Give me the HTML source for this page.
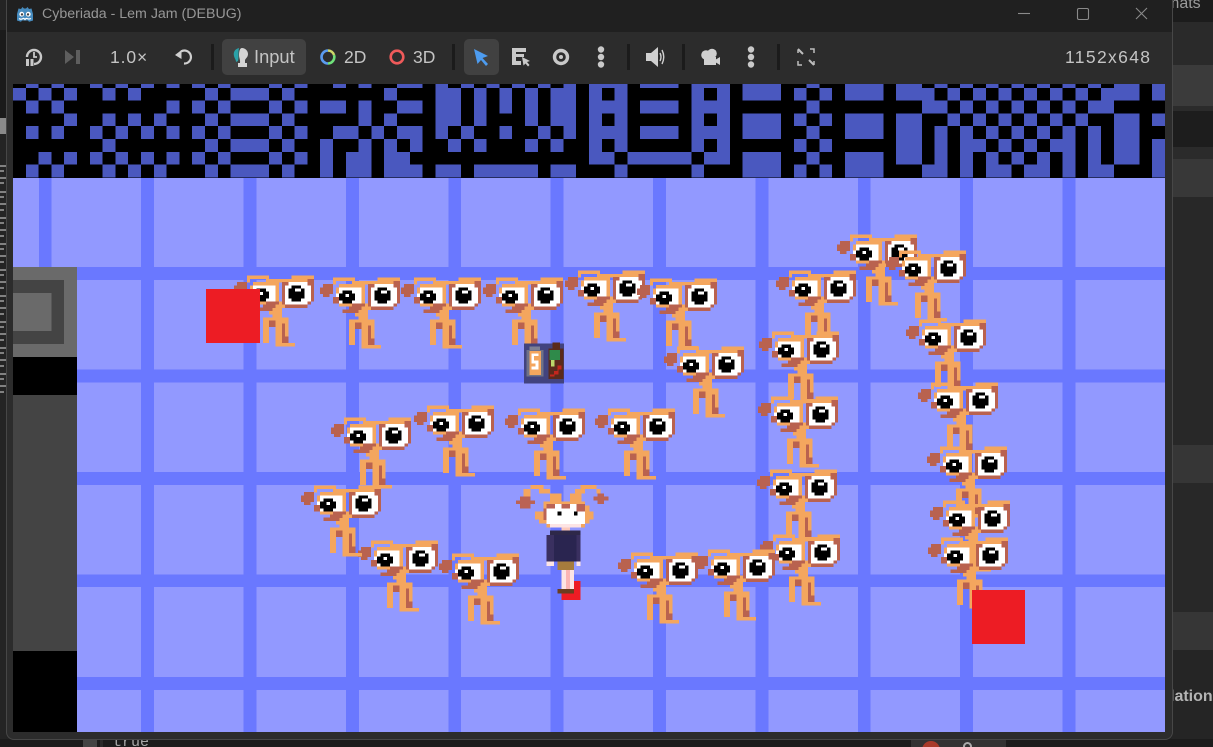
<!DOCTYPE html>
<html><head><meta charset="utf-8"><title>Cyberiada - Lem Jam (DEBUG)</title>
<style>
html,body{margin:0;padding:0;width:1213px;height:747px;overflow:hidden;background:#232323}
*{box-sizing:border-box}
.a{position:absolute}
body{font-family:"Liberation Sans",sans-serif;position:relative}
svg{display:block}
.t{position:absolute;color:#c4c4c4;font-size:17px;line-height:20px;white-space:nowrap}
.sep{position:absolute;top:44px;width:3px;height:26px;background:#1b1b1b}
.btn{position:absolute;top:39px;height:36px;background:#414141;border-radius:5px}
</style></head><body>
<!-- background editor -->
<div class="a" style="left:1172px;top:0;width:41px;height:22px;background:#1c1c1c"></div>
<div class="t" style="left:1172px;top:-6px;width:41px;overflow:hidden;font-size:16px;color:#9a9a9a;text-indent:-6px">mats</div>
<div class="a" style="left:1172px;top:22px;width:41px;height:43px;background:#2a2a2a"></div>
<div class="a" style="left:1172px;top:65px;width:41px;height:41px;background:#3b3b3b"></div>
<div class="a" style="left:1172px;top:106px;width:41px;height:5px;background:#2b2b2b"></div>
<div class="a" style="left:1172px;top:111px;width:41px;height:36px;background:#1d1d1d"></div>
<div class="a" style="left:1172px;top:147px;width:41px;height:12px;background:#2b2b2b"></div>
<div class="a" style="left:1172px;top:159px;width:41px;height:38px;background:#383838"></div>
<div class="a" style="left:1172px;top:197px;width:41px;height:500px;background:#282828"></div>
<div class="a" style="left:1172px;top:445px;width:41px;height:38px;background:#363636"></div>
<div class="a" style="left:1172px;top:612px;width:41px;height:38px;background:#363636"></div>
<div class="a" style="left:1172px;top:650px;width:41px;height:97px;background:#252525"></div>
<div class="t" style="left:1172px;top:687px;width:41px;overflow:hidden;font-size:16px;font-weight:bold;color:#b4b4b4;text-indent:-2px">lation</div>
<div class="a" style="left:0;top:0;width:6px;height:747px;background:#242424"></div>
<div class="a" style="left:0;top:30px;width:6px;height:90px;background:#1b1b1b"></div>
<div class="a" style="left:0;top:118px;width:6px;height:16px;background:#8a8a8a"></div>
<svg class="a" style="left:0;top:160px" width="6" height="240">
<path d="M0 6h6M0 11h4M0 18h6M0 23h4M0 32h6M0 37h4M0 44h6M0 50h4M0 58h6M0 63h4M0 70h6M0 76h4M0 84h6M0 89h4M0 96h6M0 102h4M0 110h6M0 115h4M0 122h6M0 128h4M0 136h6M0 141h4M0 148h6M0 154h4M0 162h6M0 167h4M0 174h6M0 180h4M0 188h6M0 193h4M0 200h6M0 206h4M0 214h6M0 219h4M0 226h6M0 232h4" stroke="#a0a0a0" stroke-width="1.6"/></svg>
<div class="a" style="left:0;top:739px;width:1213px;height:8px;background:#1c1c1c"></div>
<div class="a" style="left:83px;top:739px;width:14px;height:8px;background:#444"></div>
<div class="a" style="left:100px;top:739px;width:3px;height:8px;background:#2b2b2b"></div>
<div class="t" style="left:113px;top:733px;font-family:'Liberation Mono',monospace;font-size:15px;color:#a8a8a8">true</div>
<div class="a" style="left:911px;top:739px;width:95px;height:8px;background:#333"></div>
<div class="a" style="left:922px;top:741px;width:18px;height:18px;border-radius:50%;background:#a83a2a"></div>
<div class="a" style="left:963px;top:742px;width:9px;height:12px;border:2px solid #aaa;border-radius:5px"></div>

<!-- window -->
<div class="a" style="left:6px;top:0;width:1167px;height:740px;background:#2c2c2c;border:1px solid #474747;border-top:0;border-radius:0 0 8px 8px"></div>
<div class="a" style="left:7px;top:0;width:1165px;height:32px;background:#202020"></div>
<svg class="a" style="left:16px;top:5px" width="18" height="18" viewBox="0 0 18 18">
<path d="M1 9 2.500 3.500 5 4 6.500 2 8 3.500h2L11.500 2 13 4l2.500-.5L17 9v6.500l-4 1.200-1-1.200H6l-1 1.200-4-1.200z" fill="#478cbf"/>
<circle cx="5.700" cy="9.200" r="2.400" fill="#fff"/><circle cx="12.300" cy="9.200" r="2.400" fill="#fff"/>
<circle cx="6" cy="9.400" r="1.200" fill="#414042"/><circle cx="12" cy="9.400" r="1.200" fill="#414042"/>
<path d="M3 13.500c2 1.500 3 .5 4 0s2 1 2 1 1-1.500 2-1 2 1 4 0" stroke="#fff" stroke-width="1.200" fill="none"/></svg>
<div class="t" style="left:42px;top:4px;font-size:14.200px;color:#979797">Cyberiada - Lem Jam (DEBUG)</div>
<svg class="a" style="left:1010px;top:0" width="150" height="28" fill="none" stroke="#8a8a8a" stroke-width="1.100">
<path d="M8 13.500h12"/><rect x="67.500" y="8.500" width="11" height="11" rx="1.500"/><path d="M126 8l11 11M137 8l-11 11"/></svg>

<!-- toolbar -->
<svg class="a" style="left:24px;top:46px" width="20" height="22" viewBox="0 0 20 22">
<path d="M3 11a7 7 0 1 1 7 7" fill="none" stroke="#c8c8c8" stroke-width="2.400"/>
<path d="M10 6v5h3" fill="none" stroke="#c8c8c8" stroke-width="1.800"/>
<path d="M2 13h3v7H2zM6.500 13h3v7h-3z" fill="#c8c8c8"/></svg>
<svg class="a" style="left:65px;top:50px" width="16" height="14" viewBox="0 0 16 14"><path d="M0 0l9 7-9 7zM11 0h4v14h-4z" fill="#5e5e5e"/></svg>
<div class="t" style="left:110px;top:47px;font-size:17.500px;letter-spacing:.9px">1.0×</div>
<svg class="a" style="left:175px;top:48px" width="19" height="18" viewBox="0 0 19 18">
<path d="M6 3.500A6.500 6.500 0 1 1 9 15.500" fill="none" stroke="#d0d0d0" stroke-width="2.200"/><path d="M0 6l6.500-5v9z" fill="#d0d0d0" transform="translate(0 1)"/></svg>
<div class="sep" style="left:211px"></div>
<div class="btn" style="left:222px;width:84px"></div>
<svg class="a" style="left:232px;top:47px" width="18" height="22" viewBox="0 0 18 22">
<path d="M7 1C3 2 1 5 2 9c.5 2.500 2 3.500 2 6l2-1c1-3 0-9 1-13z" fill="#2aa1a8"/>
<path d="M10 1c3 0 6 2.500 6 6 0 3-2 4-3 6v3h2v4H6v-4h2c.5-3-1-5-1-8 0-4 1-7 3-7z" fill="#d4d4d4"/></svg>
<div class="t" style="left:254px;top:47px;font-size:18.300px">Input</div>
<svg class="a" style="left:320px;top:49px" width="16" height="16" fill="none" stroke-width="2.600">
<path d="M8 1.500A6.500 6.500 0 0 0 8 14.500" stroke="#5a9bf0"/><path d="M8 14.500A6.500 6.500 0 0 0 14 6" stroke="#6fe07a"/><path d="M14 6A6.500 6.500 0 0 0 8 1.500" stroke="#cdd86a"/></svg>
<div class="t" style="left:344px;top:47px;font-size:17.500px">2D</div>
<svg class="a" style="left:389px;top:49px" width="16" height="16" fill="none"><circle cx="8" cy="8" r="6.300" stroke="#ef5a5a" stroke-width="2.600"/></svg>
<div class="t" style="left:413px;top:47px;font-size:17.500px">3D</div>
<div class="sep" style="left:452px"></div>
<div class="btn" style="left:464px;width:35px"></div>
<svg class="a" style="left:473px;top:48px" width="16" height="18" viewBox="0 0 16 18"><path d="M1 1l14 7-5.500 2L15 16l-2 2-5-6-3.500 4z" fill="#4d9cf0"/></svg>
<svg class="a" style="left:511px;top:47px" width="20" height="20" viewBox="0 0 20 20"><path d="M1 1h14v4H5v2h8v3H5v4h5v4H1z" fill="#c9c9c9"/><path d="M11 10l8 4-3 1 2.500 3-1.500 1.500-2.500-3-2 2z" fill="#c9c9c9"/></svg>
<svg class="a" style="left:552px;top:48px" width="18" height="18" fill="none"><circle cx="9" cy="9" r="6.500" stroke="#c9c9c9" stroke-width="3.400"/><circle cx="9" cy="9" r="2" fill="#c9c9c9"/></svg>
<svg class="a" style="left:597px;top:46px" width="8" height="22" fill="#c9c9c9"><circle cx="4" cy="3.500" r="3.200"/><circle cx="4" cy="11" r="3.200"/><circle cx="4" cy="18.500" r="3.200"/></svg>
<div class="sep" style="left:627px"></div>
<svg class="a" style="left:646px;top:46px" width="20" height="22" viewBox="0 0 20 22"><path d="M0 7h5l7-6v20l-7-6H0z" fill="#d0d0d0"/><path d="M14 7q2 4 0 8M16 4q3.500 7 0 14" fill="none" stroke="#d0d0d0" stroke-width="1.400"/></svg>
<div class="sep" style="left:682px"></div>
<svg class="a" style="left:701px;top:48px" width="19" height="18" viewBox="0 0 19 18"><circle cx="5" cy="7" r="4.800" fill="#d0d0d0"/><circle cx="11" cy="5.500" r="4.800" fill="#d0d0d0"/><path d="M3 9h12v8H3zM14 12l5-3v8l-5-3z" fill="#d0d0d0"/></svg>
<svg class="a" style="left:747px;top:46px" width="8" height="22" fill="#c9c9c9"><circle cx="4" cy="3.500" r="3.200"/><circle cx="4" cy="11" r="3.200"/><circle cx="4" cy="18.500" r="3.200"/></svg>
<div class="sep" style="left:777px"></div>
<svg class="a" style="left:797px;top:48px" width="18" height="18" fill="none" stroke="#bdbdbd" stroke-width="1.500">
<path d="M1 5V1.500M13 1h4v4M1 13v4h4M17 13v4"/><path d="M1 1l5 5M17 17l-5-5" stroke-width="2"/></svg>
<div class="t" style="left:1065px;top:47px;font-size:17.500px;letter-spacing:1.350px">1152x648</div>

<!-- game floor -->
<svg class="a" style="left:13px;top:84px" width="1152" height="648" viewBox="13 84 1152 648" shape-rendering="crispEdges">
<rect x="13" y="84" width="1152" height="648" fill="#9299ff"/>
<path fill="#6a78ff" d="M39 178h12.500v554H39zM141 178h13v554h-13zM243.500 178h12.800v554h-12.800zM346 178h12.800v554H346zM448.300 178h12.800v554h-12.800zM550.700 178h12.800v554h-12.800zM653 178h12.800v554H653zM755.500 178h12.800v554h-12.800zM857.800 178h12.800v554h-12.800zM960.200 178h12.800v554h-12.800zM1062.500 178h12.800v554h-12.800zM13 267h1152v13H13zM13 369.500h1152v12.800H13zM13 472h1152v12.800H13zM13 574.300h1152v12.800H13zM13 677h1152v13H13z"/>
<rect x="13" y="267" width="64" height="465" fill="#000"/>
<rect x="13" y="267" width="64" height="90" fill="#6a6a6a"/>
<rect x="13" y="280" width="51" height="64" fill="#444"/>
<rect x="13" y="293" width="38.400" height="38" fill="#6a6a6a"/>
<rect x="13" y="395" width="64" height="256" fill="#444"/>
</svg>

<!-- tiles -->
<div class="a" style="left:13px;top:84px;width:1152px;height:93.600px;background:#000;overflow:hidden">
<svg class="a" style="left:0;top:-8.800px" width="1152" height="102.400" viewBox="0 0 90 8" shape-rendering="crispEdges">
<path fill="none" stroke="#4a58bf" stroke-width="1" d="
M1 .5h1M3 .5h1M6 .5h1M8 .5h1M10 .5h1M12 .5h1M14 .5h1M16 .5h1M20 .5h1M22 .5h1M25 .5h1M27 .5h1M30 .5h2M33 .5h1M35 .5h1M37 .5h1M39 .5h1M41 .5h1M43 .5h1M45 .5h3M49 .5h3M53 .5h3M57 .5h3M62 .5h1M65 .5h3M69 .5h2M72 .5h1M74 .5h1M76 .5h1M78 .5h1M80 .5h1M82 .5h1M84 .5h1M86 .5h2M89 .5h1
M0 1.500h1M2 1.500h1M4 1.500h1M7 1.500h1M9 1.500h1M15 1.500h1M17 1.500h3M21 1.500h1M29 1.500h1M33 1.500h2M36 1.500h1M38 1.500h1M40 1.500h1M42 1.500h2M45 1.500h1M47 1.500h1M53 1.500h1M55 1.500h1M57 1.500h3M61 1.500h1M63 1.500h1M65 1.500h3M69 1.500h3M73 1.500h1M75 1.500h1M77 1.500h1M79 1.500h1M81 1.500h1M83 1.500h1M85 1.500h3M89 1.500h1
M1 2.500h1M3 2.500h1M12 2.500h1M14 2.500h1M16 2.500h1M20 2.500h1M22 2.500h1M24 2.500h2M27 2.500h1M30 2.500h2M33 2.500h2M36 2.500h1M38 2.500h1M40 2.500h1M42 2.500h2M45 2.500h3M49 2.500h3M53 2.500h3M62 2.500h1M71 2.500h2M74 2.500h1M76 2.500h1M78 2.500h1M80 2.500h1M82 2.500h1M84 2.500h2
M4 3.500h1M7 3.500h1M9 3.500h1M11 3.500h1M15 3.500h1M17 3.500h3M21 3.500h1M27 3.500h1M29 3.500h1M33 3.500h2M36 3.500h1M40 3.500h1M42 3.500h2M45 3.500h1M47 3.500h1M53 3.500h1M55 3.500h1M57 3.500h3M61 3.500h1M63 3.500h1M65 3.500h3M69 3.500h2M73 3.500h1M75 3.500h1M77 3.500h1M79 3.500h1M81 3.500h1M83 3.500h1M86 3.500h2M89 3.500h1
M1 4.500h1M3 4.500h1M6 4.500h1M8 4.500h1M10 4.500h1M12 4.500h1M14 4.500h1M16 4.500h1M20 4.500h1M22 4.500h1M25 4.500h2M28 4.500h1M30 4.500h2M33 4.500h1M35 4.500h1M38 4.500h1M41 4.500h1M43 4.500h1M45 4.500h3M49 4.500h3M53 4.500h3M57 4.500h3M62 4.500h1M65 4.500h3M69 4.500h2M72 4.500h1M74 4.500h1M76 4.500h1M78 4.500h1M80 4.500h1M82 4.500h1M84 4.500h1M86 4.500h2
M7 5.500h1M15 5.500h1M17 5.500h3M21 5.500h1M24 5.500h1M27 5.500h1M29 5.500h1M31 5.500h1M34 5.500h1M36 5.500h1M40 5.500h1M42 5.500h1M45 5.500h1M47 5.500h1M53 5.500h1M55 5.500h1M61 5.500h1M63 5.500h1M69 5.500h2M72 5.500h1M74 5.500h2M77 5.500h1M79 5.500h1M81 5.500h2M84 5.500h1M86 5.500h2M89 5.500h1
M2 6.500h1M4 6.500h1M6 6.500h1M8 6.500h1M10 6.500h1M12 6.500h1M14 6.500h1M16 6.500h1M20 6.500h1M22 6.500h1M24 6.500h1M26 6.500h2M29 6.500h2M45 6.500h2M48 6.500h5M54 6.500h2M57 6.500h3M62 6.500h1M65 6.500h3M69 6.500h2M72 6.500h1M74 6.500h1M76 6.500h1M78 6.500h1M80 6.500h1M82 6.500h1M84 6.500h1M86 6.500h2M89 6.500h1
M1 7.500h1M3 7.500h1M7 7.500h1M9 7.500h1M11 7.500h1M15 7.500h1M17 7.500h3M21 7.500h1M24 7.500h1M26 7.500h2M29 7.500h3M33 7.500h2M36 7.500h5M42 7.500h2M47 7.500h1M53 7.500h1M57 7.500h3M61 7.500h1M63 7.500h1M65 7.500h3M71 7.500h2M74 7.500h1M76 7.500h2M79 7.500h2M82 7.500h1M84 7.500h2M89 7.500h1"/>
</svg></div>

<!-- sprites -->
<svg class="a" style="left:0;top:0" width="1213" height="747" viewBox="0 0 1213 747">
<defs>
<symbol id="e" viewBox="0 0 28 27" width="89.600" height="86.400" overflow="visible">
<g fill="none" stroke-width="1.080" shape-rendering="crispEdges">
<path stroke="#f4a65e" d="M4 4.500h7M18 4.500h7M4 5.500h1M10 5.500h13M6 6.500h8M5 7.500h1M13 7.500h1M5 8.500h1M13 8.500h1M13 9.500h1M13 10.500h1M13 11.500h1M6 12.500h4M14 12.500h1M13 13.500h3M12 14.500h3M11 15.500h4M12 16.500h3M9 17.500h8M9 18.500h2M13 18.500h4M9 19.500h2M13 19.500h2M16 19.500h1M9 20.500h2M13 20.500h2M16 20.500h1M9 21.500h2M13 21.500h2M16 21.500h1M9 22.500h2M13 22.500h2M16 22.500h1M9 23.500h2M13 23.500h2M9 24.500h2M13 24.500h2M13 25.500h2M15 25.500h4"/>
<path stroke="#b9624f" d="M23 5.500h2M1 6.500h3M15 6.500h2M23 6.500h2M0 7.500h4M15 7.500h1M24 7.500h1M0 8.500h4M15 8.500h1M24 8.500h1M1 9.500h2M15 9.500h1M24 9.500h1M4 10.500h2M15 10.500h1M24 10.500h1M4 11.500h2M15 11.500h1M24 11.500h1M10 12.500h4M15 12.500h1M23 12.500h1M9 13.500h4M16 13.500h7M7 14.500h5M11 18.500h2M11 19.500h2M15 19.500h1M15 20.500h1M15 21.500h1M15 22.500h1M15 23.500h2M15 24.500h2"/>
<path stroke="#fff" d="M17 6.500h6M6 7.500h7M16 7.500h2M21 7.500h3M6 8.500h1M10 8.500h3M16 8.500h1M19 8.500h2M22 8.500h2M5 9.500h1M8 9.500h1M11 9.500h2M16 9.500h1M22 9.500h2M11 10.500h2M16 10.500h1M22 10.500h2M6 11.500h1M10 11.500h3M16 11.500h2M21 11.500h3M16 12.500h7"/>
<path stroke="#000" d="M18 7.500h3M7 8.500h3M17 8.500h2M21 8.500h1M6 9.500h2M9 9.500h2M17 9.500h5M6 10.500h5M17 10.500h5M7 11.500h3M18 11.500h3"/>
</g></symbol>
</defs>
<use href="#e" x="234" y="263"/>
<use href="#e" x="320" y="265"/><use href="#e" x="401" y="265"/><use href="#e" x="483" y="265"/><use href="#e" x="565" y="258"/><use href="#e" x="637" y="266"/>
<use href="#e" x="776" y="258"/><use href="#e" x="837" y="222"/><use href="#e" x="886" y="238"/><use href="#e" x="906" y="307"/><use href="#e" x="918" y="370"/><use href="#e" x="927" y="434"/><use href="#e" x="930" y="488"/><use href="#e" x="928" y="525"/>
<use href="#e" x="759" y="319"/><use href="#e" x="664" y="334"/><use href="#e" x="758" y="384"/><use href="#e" x="757" y="457"/><use href="#e" x="760" y="522"/>
<use href="#e" x="695" y="537"/><use href="#e" x="618" y="540"/><use href="#e" x="439" y="541"/><use href="#e" x="358" y="528"/><use href="#e" x="301" y="473"/>
<use href="#e" x="331" y="405"/><use href="#e" x="414" y="393"/><use href="#e" x="505" y="396"/><use href="#e" x="595" y="396"/>
<rect x="206" y="289" width="54" height="54" fill="#ed1c24"/>
<rect x="972" y="590" width="53" height="54" fill="#ed1c24"/>

<!-- item box (zoom coords) -->
<g transform="translate(515 335) scale(.3333)" shape-rendering="crispEdges">
<rect x="27" y="25" width="120" height="120" fill="#42437e"/>
<rect x="43" y="35" width="32" height="10" fill="#7d8094"/>
<rect x="35" y="45" width="50" height="80" fill="#6f7288"/>
<rect x="43" y="48" width="35" height="72" fill="#f4a65e"/>
<path d="M50 55h20v8H57v14h13v26H50v-8h12V85H50z" fill="#fff"/>
<rect x="112" y="22" width="23" height="18" fill="#5a2a1c"/>
<rect x="100" y="40" width="45" height="92" fill="#5a2a1c"/>
<rect x="103" y="45" width="32" height="30" fill="#2f8a4a"/>
<rect x="108" y="75" width="10" height="20" fill="#bcd86a"/>
<path d="M105 118h12v-10h10V92h13v12h-10v14h-12v7h-13z" fill="#c4261e"/>
</g>

<!-- player (zoom coords) -->
<g transform="translate(510 480) scale(.3333)" shape-rendering="crispEdges">
<rect x="155" y="303" width="57" height="57" fill="#ed1c24"/>
<path fill="#f4a65e" d="M62 15h38v12H62zM40 27h22v23H40zM87 27h33v13H87zM120 40h35v25h-35zM212 15h48v12h-48zM195 27h30v13h-30zM260 27h12v13h-12zM180 40h35v25h-35zM100 65h125v12H100zM100 77h10v18h-10zM75 95h35v23H75zM87 118h23v12H87zM225 77h13v18h-13zM225 95h25v23h-25zM225 118h13v12h-13zM213 132h12v11h-12zM110 132h10v11h-10z"/>
<path fill="#bb6354" d="M30 50h32v12h13v10H62v13H30V72H18V62h12zM262 40h20v10h13v12h-13v10h-20V62h-12V50h12z"/>
<rect x="110" y="72" width="115" height="60" fill="#fff"/>
<rect x="120" y="132" width="93" height="11" fill="#fde4e4"/>
<path fill="#bb6354" d="M100 85h10v35h-10zM110 72h25v13h-25zM155 72h25v13h-25zM200 72h25v23h-25z"/>
<rect x="143" y="95" width="12" height="12" fill="#000"/><rect x="192" y="95" width="10" height="12" fill="#000"/>
<rect x="155" y="143" width="25" height="9" fill="#fbc9bd"/>
<rect x="120" y="152" width="92" height="13" fill="#2e2849"/>
<rect x="132" y="165" width="68" height="80" fill="#2a2550"/>
<rect x="110" y="165" width="22" height="80" fill="#3a3060"/>
<rect x="200" y="165" width="12" height="80" fill="#3a3060"/>
<rect x="110" y="245" width="22" height="13" fill="#fde4e4"/>
<rect x="200" y="245" width="12" height="13" fill="#fde4e4"/>
<rect x="143" y="245" width="49" height="25" fill="#a67c3d"/>
<rect x="155" y="270" width="37" height="57" fill="#fbb4b4"/>
<rect x="155" y="270" width="13" height="57" fill="#fde4e4"/>
<rect x="180" y="270" width="12" height="57" fill="#fde4e4"/>
<rect x="143" y="327" width="49" height="13" fill="#6b3d1f"/>
</g>
</svg>
</body></html>
